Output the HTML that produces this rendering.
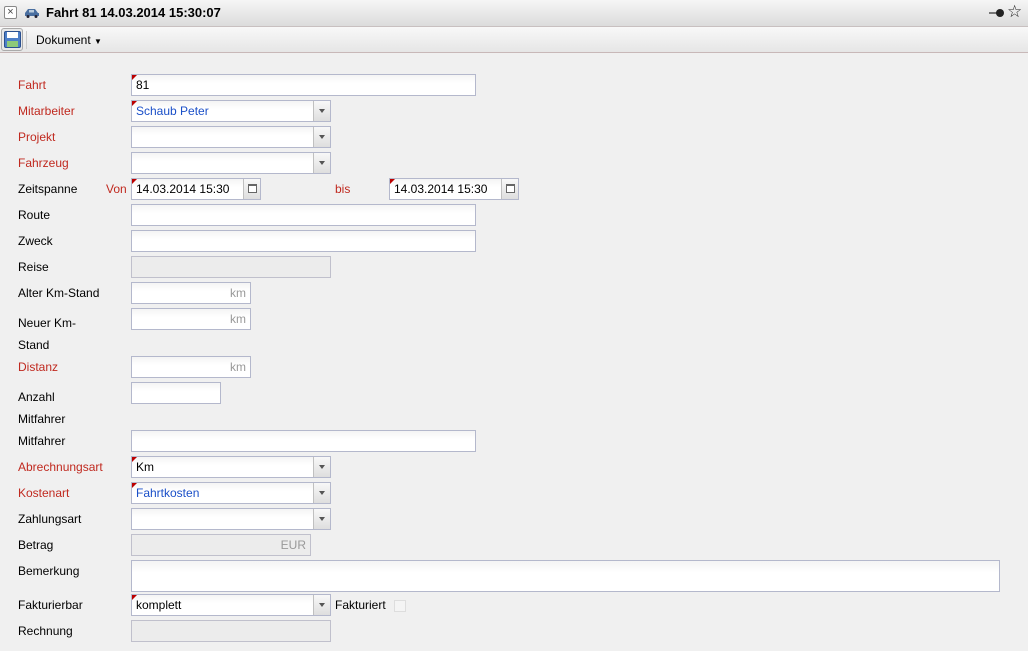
<!DOCTYPE html>
<html><head><meta charset="utf-8"><style>
*{box-sizing:border-box;margin:0;padding:0}
body{width:1028px;height:651px;background:#f0f0f0;font-family:"Liberation Sans",sans-serif;font-size:12px;color:#000;position:relative;overflow:hidden}
.title{position:absolute;left:0;top:0;width:1028px;height:27px;background:linear-gradient(#f6f6f6,#dcdcdc);border-bottom:1px solid #c8c0c0}
.tb{position:absolute;left:0;top:27px;width:1028px;height:26px;background:linear-gradient(#f8f8f8,#e6e6e6);border-bottom:1px solid #c8b8b8}
.a{position:absolute}
.l{position:absolute;left:18px;line-height:14px}
.r{color:#c0291f}
.i{position:absolute;height:22px;background:linear-gradient(#f4f4f4,#fff 40%);border:1px solid #b4b8cc;padding-left:4px;line-height:20px;font-size:12px}
.d{background:#ececec;border-color:#c0c0cc}
.req:before{content:"";position:absolute;left:0;top:0;border-top:5px solid #b00;border-right:5px solid transparent}
.sel .btn{position:absolute;right:0;top:0;width:17px;height:20px;border-left:1px solid #c0c0c0;background:linear-gradient(#f8f8f8,#dedede)}
.sel .btn:after{content:"";position:absolute;left:5px;top:8px;border-top:4px solid #555;border-left:3.5px solid transparent;border-right:3.5px solid transparent}
.sel .cal:after{display:none}
.cal i{position:absolute;left:4px;top:5px;width:9px;height:9px;border:1px solid #666;border-top-width:2px;background:#fff}
.unit{position:absolute;right:4px;top:0;color:#999}
.blue{color:#1a4fc8}
</style></head><body>
<div class="title">
 <div class="a" style="left:4px;top:6px;width:13px;height:13px;border:1px solid #888;border-radius:2px;background:#fff;font-size:11px;line-height:11px;text-align:center;color:#444">×</div>
 <svg class="a" style="left:24px;top:8px" width="16" height="10" viewBox="0 0 16 10"><path d="M1 5 L4 1 H11 L14 5 H15 V8 H1Z" fill="#4a6fa0"/><circle cx="4" cy="8.5" r="1.5" fill="#223"/><circle cx="12" cy="8.5" r="1.5" fill="#223"/><rect x="5" y="2" width="5" height="2.5" fill="#bcd"/></svg>
 <div class="a" style="left:46px;top:5px;font-weight:bold;font-size:13px">Fahrt 81 14.03.2014 15:30:07</div>
 <svg class="a" style="left:989px;top:8px" width="16" height="10"><rect x="0" y="4" width="8" height="2" fill="#777"/><circle cx="11" cy="5" r="4" fill="#222"/></svg>
 <div class="a" style="left:1007px;top:2px;font-size:17px;color:#222">☆</div>
</div>
<div class="tb">
 <div class="a" style="left:1px;top:1px;width:22px;height:23px;border:1px solid #aaa;border-radius:3px;background:#e8e8e8"></div>
 <svg class="a" style="left:4px;top:4px" width="17" height="17"><rect x="0.5" y="0.5" width="16" height="16" rx="1.5" fill="#4d7fc8" stroke="#2a5090"/><rect x="3" y="1" width="11" height="6" fill="#fff"/><rect x="3" y="10" width="11" height="6" fill="#8ec97a"/></svg>
 <div class="a" style="left:26px;top:4px;width:1px;height:18px;background:#ccc"></div>
 <div class="a" style="left:36px;top:6px">Dokument <span style="font-size:8px">▼</span></div>
</div>

<div class="l r" style="top:78px">Fahrt</div>
<div class="i req" style="left:131px;top:74px;width:345px">81</div>

<div class="l r" style="top:104px">Mitarbeiter</div>
<div class="i req sel blue" style="left:131px;top:100px;width:200px">Schaub Peter<div class="btn"></div></div>

<div class="l r" style="top:130px">Projekt</div>
<div class="i sel" style="left:131px;top:126px;width:200px"><div class="btn"></div></div>

<div class="l r" style="top:156px">Fahrzeug</div>
<div class="i sel" style="left:131px;top:152px;width:200px"><div class="btn"></div></div>

<div class="l" style="top:182px">Zeitspanne</div>
<div class="a r" style="left:106px;top:182px">Von</div>
<div class="i req sel" style="left:131px;top:178px;width:130px">14.03.2014 15:30<div class="btn cal"><i></i></div></div>
<div class="a r" style="left:335px;top:182px">bis</div>
<div class="i req sel" style="left:389px;top:178px;width:130px">14.03.2014 15:30<div class="btn cal"><i></i></div></div>

<div class="l" style="top:208px">Route</div>
<div class="i" style="left:131px;top:204px;width:345px"></div>
<div class="l" style="top:234px">Zweck</div>
<div class="i" style="left:131px;top:230px;width:345px"></div>
<div class="l" style="top:260px">Reise</div>
<div class="i d" style="left:131px;top:256px;width:200px"></div>
<div class="l" style="top:286px">Alter Km-Stand</div>
<div class="i" style="left:131px;top:282px;width:120px"><span class="unit">km</span></div>
<div class="l" style="top:312px;line-height:22px">Neuer Km-<br>Stand</div>
<div class="i" style="left:131px;top:308px;width:120px"><span class="unit">km</span></div>
<div class="l r" style="top:360px">Distanz</div>
<div class="i" style="left:131px;top:356px;width:120px"><span class="unit">km</span></div>
<div class="l" style="top:386px;line-height:22px">Anzahl<br>Mitfahrer</div>
<div class="i" style="left:131px;top:382px;width:90px"></div>
<div class="l" style="top:434px">Mitfahrer</div>
<div class="i" style="left:131px;top:430px;width:345px"></div>
<div class="l r" style="top:460px">Abrechnungsart</div>
<div class="i req sel" style="left:131px;top:456px;width:200px">Km<div class="btn"></div></div>
<div class="l r" style="top:486px">Kostenart</div>
<div class="i req sel blue" style="left:131px;top:482px;width:200px">Fahrtkosten<div class="btn"></div></div>
<div class="l" style="top:512px">Zahlungsart</div>
<div class="i sel" style="left:131px;top:508px;width:200px"><div class="btn"></div></div>
<div class="l" style="top:538px">Betrag</div>
<div class="i d" style="left:131px;top:534px;width:180px"><span class="unit">EUR</span></div>
<div class="l" style="top:564px">Bemerkung</div>
<div class="i" style="left:131px;top:560px;width:869px;height:32px"></div>
<div class="l" style="top:598px">Fakturierbar</div>
<div class="i req sel" style="left:131px;top:594px;width:200px">komplett<div class="btn"></div></div>
<div class="a" style="left:335px;top:598px">Fakturiert</div>
<div class="a" style="left:394px;top:600px;width:12px;height:12px;border:1px solid #ddd;background:#f4f4f4"></div>
<div class="l" style="top:624px">Rechnung</div>
<div class="i d" style="left:131px;top:620px;width:200px"></div>
</body></html>
